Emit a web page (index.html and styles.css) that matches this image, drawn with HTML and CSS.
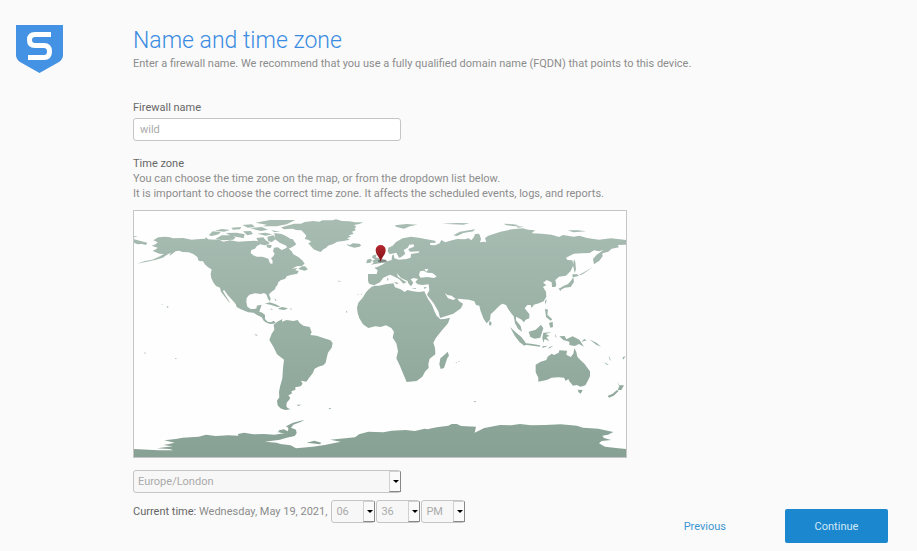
FILE: index.html
```html
<!DOCTYPE html>
<html lang="en">
<head>
<meta charset="utf-8">
<meta name="viewport" content="width=device-width, initial-scale=1">
<title>Name and time zone</title>
<link rel="stylesheet" href="styles.css">
</head>
<body>
<div class="page">
  <svg class="logo" viewBox="0 0 47 48" role="img" aria-label="Logo">
    <path fill="#4492e3" d="M0 0H47V30Q47 34 43 37L23.500 48L4 37Q0 34 0 30Z"/>
    <path fill="none" stroke="#fff" stroke-width="5" d="M35 9.500H19Q13.500 9.500 13.500 15Q13.500 20.500 19 20.500H28Q33.500 20.500 33.500 26.500Q33.500 32.500 28 32.500H12"/>
  </svg>
  <main class="content">
    <h1>Name and time zone</h1>
    <p class="intro">Enter a firewall name. We recommend that you use a fully qualified domain name (FQDN) that points to this device.</p>

    <label class="label" for="name">Firewall name</label>
    <input class="field" id="name" type="text" value="wild">

    <label class="label zone-label" for="zone">Time zone</label>
    <p>You can choose the time zone on the map, or from the dropdown list below.</p>
    <p>It is important to choose the correct time zone. It affects the scheduled events, logs, and reports.</p>

    <svg class="map" viewBox="12 9 1476 738" role="img" aria-label="World map">
      <defs>
        <linearGradient id="land" gradientUnits="userSpaceOnUse" x1="0" y1="9" x2="0" y2="747">
          <stop offset="0" stop-color="#a9bdb3"/><stop offset="1" stop-color="#87a194"/>
        </linearGradient>
        <linearGradient id="pin" x1="0" y1="0" x2="0" y2="1">
          <stop offset="0" stop-color="#b5282f"/><stop offset="1" stop-color="#7f1015"/>
        </linearGradient>
      </defs>
      <g fill="url(#land)">
        <!-- North and Central America -->
        <path d="M70 97L85 88 105 86 120 88 128 91 160 90 185 95 200 94 225 92 229 88 234 94 270 96 280 101 300 97 325 101 345 100 375 98 390 101 410 98 420 105 405 112 390 109 380 115 375 122 364 126 362 135 370 142 380 146 397 146 415 152 420 166 427 168 428 158 423 151 430 145 434 137 429 130 432 119 443 118 455 126 463 123 472 118 478 124 485 130 490 139 505 147 518 158 524 167 515 174 500 175 486 182 501 180 496 187 506 189 502 197 482 201 470 205 466 212 452 217 445 223 442 232 437 237 435 244 421 254 417 260 422 272 420 280 414 273 410 260 402 255 393 258 375 256 358 260 350 270 349 282 352 296 362 303 374 303 380 300 380 293 395 290 391 302 388 311 397 314 405 321 405 333 413 341 423 343 431 338 437 344 431 347 421 348 411 345 401 338 395 328 381 321 370 314 355 313 345 309 331 303 320 297 317 288 306 275 293 261 283 247 278 248 286 262 300 284 297 283 285 267 273 251 270 239 258 234 251 225 244 211 242 198 245 183 237 176 226 171 219 160 207 158 203 148 190 138 176 133 157 132 148 128 137 130 127 137 118 144 122 134 110 141 98 149 75 156 50 161 35 164 20 167 45 159 67 155 90 145 101 138 88 137 75 132 68 128 78 124 83 119 65 113 77 109 83 103Z"/>
        <path d="M12 94L32 99 52 104 48 111 36 108 22 109 12 104ZM12 84L23 86 13 88ZM226 166L238 174 248 182 244 184 232 176ZM202 146L208 156 214 162 205 157Z"/>
        <!-- Arctic archipelago -->
        <path d="M236 82L248 70 272 72 266 79 246 84ZM255 94L275 82 300 82 317 88 310 95 280 97ZM255 68L275 63 300 66 282 71ZM287 75L320 74 344 79 341 91 323 87 304 84ZM304 59L334 57 330 64 309 65ZM337 51L366 49 374 56 354 59ZM339 70L362 69 369 78 352 82ZM360 60L395 57 414 65 392 69ZM376 44L420 36 496 36 470 49 440 55 398 55 410 50ZM382 77L405 74 427 79 407 83ZM379 90L400 88 409 99 386 103ZM412 86L431 82 437 93 425 103 414 98ZM433 75L455 78 469 85 491 98 499 109 487 117 473 124 469 113 449 104 436 94ZM463 89L489 94 492 100 477 98ZM409 109L426 112 421 121 411 118ZM424 67L451 71 432 72ZM504 183L516 175 525 175 534 184 524 188 513 185Z"/>
        <!-- Greenland and Iceland -->
        <path d="M454 58L476 52 493 47 513 47 524 42 550 39 568 41 577 37 608 37 618 34 636 39 658 40 676 43 700 43 688 48 672 51 679 56 674 61 677 67 666 71 671 78 656 82 663 87 651 90 659 95 641 99 622 101 608 109 594 113 588 120 580 124 572 132 563 129 551 124 542 114 535 106 544 101 534 95 524 93 529 83 522 75 514 67 498 66 488 62 461 64ZM649 108L660 111 668 106 688 107 694 112 688 116 673 119 656 114Z"/>
        <!-- Caribbean -->
        <path d="M405 287L419 283 437 289 452 297 442 297 421 290ZM445 301L457 297 474 301 463 306 447 304ZM420 302L430 303 424 305ZM478 302L486 302 484 305ZM433 269L440 278 436 278ZM95 287L100 291 96 290ZM109 293L116 297 113 300Z"/>
        <!-- South America -->
        <path d="M425 377L433 365 431 350 442 341 457 333 456 341 470 336 490 339 503 336 509 345 520 353 539 357 545 373 541 381 560 383 580 390 601 397 608 405 605 419 594 434 590 450 587 464 580 472 565 476 554 482 548 496 537 510 529 521 513 518 518 527 512 535 496 538 496 546 485 549 485 557 475 562 481 570 477 576 470 584 469 594 472 599 481 604 465 606 451 601 443 592 441 578 448 568 447 552 450 536 457 511 459 480 462 455 441 439 431 418 418 396Z"/>
        <path d="M500 590L514 590 505 594ZM595 600L604 601 600 604ZM374 379L384 381 378 383Z"/>
        <!-- Africa and Madagascar -->
        <path d="M725 236L735 233 747 233 766 229 790 226 795 238 812 244 824 252 832 246 848 250 867 252 883 250 887 259 894 273 906 291 913 309 920 323 931 334 942 333 960 329 954 346 936 367 918 389 910 404 915 419 916 439 899 452 895 469 896 480 886 490 877 506 860 519 830 522 821 501 810 474 799 451 804 430 799 406 788 389 792 371 784 360 768 352 752 357 736 355 715 360 699 349 688 331 683 315 681 299 685 284 698 269 708 253 715 245ZM953 431L957 443 952 450 942 480 932 483 928 469 931 451 942 442Z"/>
        <!-- Europe and Asia -->
        <path d="M714 198L740 198 743 187 733 179 744 176 760 168 771 160 785 156 786 143 791 139 793 151 807 155 829 153 842 149 843 138 866 134 868 130 839 131 835 123 852 116 851 109 838 110 833 119 821 126 826 137 814 147 807 149 799 134 779 139 773 130 775 119 788 113 798 102 818 91 843 86 866 89 890 94 915 98 918 104 900 105 901 111 915 112 929 106 934 96 946 103 966 97 982 93 1003 94 1016 91 1024 97 1032 87 1035 78 1047 77 1050 83 1053 93 1050 103 1063 101 1069 103 1065 90 1075 83 1100 75 1112 71 1145 64 1178 61 1195 65 1215 67 1205 76 1235 77 1265 80 1287 87 1299 81 1331 86 1348 83 1371 90 1407 95 1443 91 1470 94 1488 96 1488 110 1463 111 1467 118 1445 122 1435 131 1417 136 1418 145 1408 158 1392 169 1389 153 1400 140 1421 125 1407 130 1392 127 1379 135 1355 136 1332 137 1308 149 1312 156 1327 157 1330 172 1322 189 1308 203 1287 206 1276 216 1279 230 1276 237 1266 237 1265 223 1250 216 1238 226 1231 220 1246 213 1239 216 1236 222 1249 231 1239 237 1248 251 1249 266 1241 280 1227 286 1209 291 1192 291 1184 301 1198 318 1198 331 1187 335 1182 343 1173 334 1158 326 1158 337 1172 354 1176 371 1164 362 1155 346 1151 325 1143 315 1136 305 1128 291 1117 287 1108 293 1095 307 1082 319 1080 335 1070 346 1061 333 1051 307 1048 293 1038 291 1033 280 1017 275 985 272 974 271 965 263 952 261 944 254 954 271 970 276 981 269 987 280 999 287 993 301 970 317 930 330 926 312 911 286 891 260 898 247 896 229 877 231 863 229 856 222 864 213 851 210 842 214 850 224 843 235 835 226 833 219 813 210 800 195 804 206 823 219 830 222 820 227 808 214 791 205 780 200 760 209 750 223 732 232 717 227 714 218Z"/>
        <!-- British Isles, Japan, islands of the north -->
        <path d="M727 143L740 139 737 148 747 151 754 160 753 165 735 168 723 170 731 164 727 157 736 155 727 149ZM711 155L722 152 726 158 721 164 709 166ZM1332 153L1336 163 1338 184 1334 195 1329 171ZM1327 199L1343 199 1346 204 1328 208ZM1330 207L1332 222 1322 237 1304 239 1292 246 1285 244 1300 234 1314 228 1323 218ZM1286 240L1295 243 1291 250ZM970 82L990 71 1035 64 1030 70 1000 75 981 84ZM794 52L830 48 862 50 840 55 822 62 800 57ZM936 47L980 45 1018 46 1000 50ZM1122 47L1150 49 1167 52 1152 55 1127 51ZM1155 54L1182 56 1165 59ZM1313 67L1345 67 1368 70 1330 73ZM1345 202L1390 177 1355 200ZM792 221L806 225 800 229ZM771 209L776 213 773 220ZM844 240L858 240 857 243ZM881 238L891 237 884 243Z"/>
        <!-- South-east Asia -->
        <path d="M1078 338L1085 344 1083 353 1077 350ZM1245 279L1251 274 1246 290ZM1245 302L1254 305 1252 320 1267 334 1262 338 1248 327ZM1202 290L1212 292 1204 299ZM1257 345L1268 341 1269 357 1261 359ZM1140 357L1157 373 1175 388 1187 404 1184 414 1169 403 1154 383ZM1182 405L1203 407 1230 412 1231 416 1185 410ZM1196 371L1217 365 1233 350 1240 361 1231 389 1214 392 1201 387ZM1240 374L1265 373 1247 378 1259 384 1249 387 1258 400 1244 393 1240 404 1237 389ZM1237 415L1254 413 1238 420ZM1258 417L1270 413 1255 423ZM1288 385L1304 384 1309 394 1328 385 1348 395 1362 416 1347 408 1334 414 1318 411 1318 401 1300 396ZM1363 393L1370 397 1354 402ZM1276 377L1280 389 1276 386ZM1378 394L1400 405 1413 416 1399 410ZM1422 461L1436 471 1430 470ZM1436 442L1443 459 1438 453ZM1478 448L1487 445 1479 455Z"/>
        <!-- Australia and New Zealand -->
        <path d="M1217 470L1232 461 1249 456 1253 446 1265 437 1272 441 1286 434 1288 427 1311 428 1309 440 1322 447 1330 437 1333 421 1339 432 1342 446 1351 456 1364 468 1372 479 1380 490 1380 505 1372 521 1366 532 1352 536 1340 531 1329 533 1318 520 1315 513 1307 519 1302 509 1285 508 1265 509 1250 516 1225 521 1225 509 1217 493ZM1344 545L1358 546 1352 557 1345 552ZM1460 520L1468 532 1482 532 1474 546 1463 546 1468 535ZM1461 546L1466 549 1451 563 1437 569 1433 564 1448 557Z"/>
        <!-- Antarctica -->
        <path d="M12 723L85 727 130 727 119 723 81 721 128 715 100 711 117 708 134 704 103 697 138 693 158 689 206 686 228 680 257 684 295 682 325 683 324 678 342 674 370 679 402 678 433 680 463 676 442 672 460 664 474 670 475 660 468 655 489 644 524 635 512 642 490 650 483 659 498 665 500 676 494 684 470 689 450 695 405 701 440 704 451 708 482 712 498 721 548 716 584 711 632 701 601 695 675 688 687 679 715 671 760 673 785 668 827 666 854 669 884 662 892 664 920 658 955 653 965 648 980 648 994 654 1038 656 1034 674 1063 660 1110 651 1143 652 1170 648 1203 652 1245 651 1292 649 1341 653 1359 659 1405 662 1450 672 1434 680 1417 683 1422 690 1443 696 1415 699 1407 706 1425 716 1465 721 1488 723 1488 747 12 747ZM530 704L553 698 574 704 570 709ZM446 667L463 664 466 674 452 675ZM1030 580L1040 580 1034 583Z"/>
        <path d="M41 434L48 434 45 437ZM135 450L141 451 137 453ZM25 557L30 559ZM977 463L982 464 978 466ZM985 460L990 461 986 463ZM682 259L687 260 684 262ZM692 257L697 260 693 260ZM624 218L634 219 626 221ZM648 308L653 312 649 314Z"/>
      </g>
      <path fill="#fff" d="M867 202L870 190 881 188 892 194 907 195 920 205 913 210 892 207 872 209ZM883 184L896 183 889 191Z"/>
      <ellipse cx="757" cy="159" rx="13" ry="5" fill="#61716a" opacity=".8"/>
      <path fill="url(#pin)" d="M752 162C750 147 737 142 737 126A15 15 0 0 1 767 126C767 142 754 147 752 162Z"/>
    </svg>

    <span class="picker picker-zone">
      <select id="zone"><option>Europe/London</option></select>
    </span>

    <div class="bottom">
      <div class="time">
        <span class="now"><b>Current time:</b> Wednesday, May 19, 2021,</span>
        <span class="picker"><select aria-label="Hour"><option>06</option></select></span>
        <span class="picker"><select aria-label="Minute"><option>36</option></select></span>
        <span class="picker"><select aria-label="AM or PM"><option>PM</option></select></span>
      </div>
      <div class="actions">
        <a href="#">Previous</a>
        <button type="button">Continue</button>
      </div>
    </div>
  </main>
</div>
</body>
</html>
```
FILE: styles.css
```css
* { box-sizing: border-box; }

body {
  margin: 0;
  background: #fafafa;
  color: #8c8c8c;
  font: 11px/15px Roboto, "Liberation Sans", sans-serif;
}

.page {
  display: flex;
  align-items: flex-start;
  gap: 70px;
  padding: 25px 29px 8px 16px;
}

.logo { width: 47px; height: 48px; flex: none; }

.content { flex: 1; min-width: 0; }

h1 {
  margin: 0;
  color: #3a8ce2;
  font-size: 23px;
  font-weight: 300;
  line-height: 31px;
}

p { margin: 0; }

.intro { margin-bottom: 29px; }

.label {
  display: block;
  color: #666;
  margin-bottom: 3px;
}

.zone-label { margin: 15px 0 0; }

.field {
  display: block;
  width: 268px;
  max-width: 100%;
  height: 23px;
  padding: 0 6px;
  border: 1px solid #c5c5c5;
  border-radius: 3px;
  background: #fff;
  color: #aaa;
  font: inherit;
}

.map {
  display: block;
  width: 100%;
  max-width: 494px;
  margin: 9px 0 12px;
  border: 1px solid #c5c5c5;
  background: #fefefe;
}

.picker {
  display: block;
  position: relative;
  width: 44px;
  height: 23px;
}

.picker-zone { width: 268px; max-width: 100%; }

.picker select {
  appearance: none;
  display: block;
  width: 100%;
  height: 100%;
  padding: 0 12px 0 4px;
  border: 1px solid #c5c5c5;
  border-radius: 3px;
  background: #f7f7f7;
  color: #aaa;
  font: inherit;
}

.picker::before {
  content: "";
  position: absolute;
  top: 1px;
  right: 0;
  bottom: 1px;
  width: 10px;
  border: 1px solid #d0d0d0;
  border-right-color: #888;
  border-bottom-color: #888;
  background: #fafafa;
  pointer-events: none;
}

.picker::after {
  content: "";
  position: absolute;
  top: 10px;
  right: 2px;
  border: 3px solid transparent;
  border-top-color: #000;
  border-bottom: 0;
  pointer-events: none;
}

.bottom {
  display: flex;
  flex-wrap: wrap;
  justify-content: space-between;
  align-items: flex-start;
  margin-top: 7px;
}

.time { display: flex; align-items: center; gap: 1px; }

.now { margin-right: 3px; }

.now b { color: #666; font-weight: 400; }

.actions {
  display: flex;
  align-items: center;
  gap: 59px;
  margin-top: 9px;
}

.actions a { color: #3c96d2; text-decoration: none; }

.actions button {
  width: 103px;
  height: 34px;
  border: 0;
  border-radius: 2px;
  background: #1a87cf;
  color: #d3e8f6;
  font: inherit;
}
```
